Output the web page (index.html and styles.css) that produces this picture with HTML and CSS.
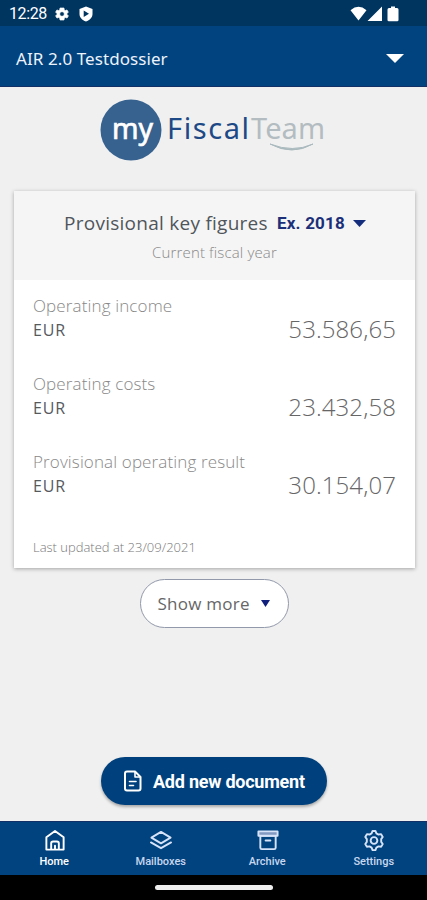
FILE: index.html
```html
<!DOCTYPE html>
<html lang="en">
<head>
<meta charset="utf-8">
<title>My FiscalTeam</title>
<link rel="stylesheet" href="styles.css">
</head>
<body>
<div class="screen">
  <div class="status">
    <span class="time">12:28</span>
    <svg class="gear" width="16" height="16" viewBox="0 0 24 24"><path fill="#fff" stroke="#fff" fill-rule="evenodd" d="M19.400 13a7.500 7.500 0 0 0 0-2l2.100-1.600-2-3.500-2.500 1a7.500 7.500 0 0 0-1.700-1L15 3H9l-.4 2.900a7.500 7.500 0 0 0-1.700 1l-2.500-1-2 3.500L4.600 11a7.500 7.500 0 0 0 0 2l-2.200 1.600 2 3.500 2.500-1a7.500 7.500 0 0 0 1.700 1L9 21h6l.4-2.900a7.500 7.500 0 0 0 1.700-1l2.500 1 2-3.500zM12 8.500a3.500 3.500 0 1 1 0 7 3.500 3.500 0 0 1 0-7z"/></svg>
    <svg class="shield" width="14" height="16" viewBox="0 0 14 16"><path fill="#fff" fill-rule="evenodd" d="M7 .5 13.500 3v5c0 3.500-2.700 6.200-6.500 7.500C3.200 14.200.5 11.500.5 8V3zM4.700 4.500v6.500L10 7.700z"/></svg>
    <svg class="signals" width="50" height="16" viewBox="0 0 50 16" fill="#fff"><path d="M.5 4.200Q8.500-2.500 16.500 4.200L8.500 14.500zM32 .5V15H17.500zM41 .5h4v1.500h2q1.500 0 1.500 1.500V14q0 1.300-1.300 1.300h-8.400Q37.500 15.300 37.500 14V3.500q0-1.500 1.500-1.500h2z"/></svg>
  </div>
  <header class="topbar">
    <span class="dossier">AIR 2.0 Testdossier</span>
    <svg width="18" height="9" viewBox="0 0 18 9"><path fill="#fff" d="M0 0h18L9 9z"/></svg>
  </header>
  <main>
    <svg class="logo" width="228" height="64" viewBox="0 0 228 64">
      <circle cx="31" cy="32" r="30.500" fill="#37628f"/>
      <g class="logo-text">
        <text class="my" x="12" y="41" textLength="41" lengthAdjust="spacingAndGlyphs">my</text>
        <text x="67" y="41" fill="#1d4987" textLength="82" lengthAdjust="spacing">Fiscal</text>
        <text x="151" y="41" fill="#b3bcc1" textLength="74" lengthAdjust="spacing">Team</text>
      </g>
      <path d="M170 46q22 12 43 0q-20 9-43 0z" fill="#a9b9bd" stroke="#a9b9bd"/>
    </svg>
    <section class="card">
      <div class="card-head">
        <div class="title-row"><h1>Provisional key figures</h1><span class="year">Ex. 2018</span>
          <svg width="13" height="7" viewBox="0 0 13 7"><path fill="#152d7d" d="M0 0h13L6.500 7z"/></svg></div>
        <div class="sub">Current fiscal year</div>
      </div>
      <div class="figures">
        <div class="row"><div><div class="label">Operating income</div><div class="cur">EUR</div></div><div class="amount">53.586,65</div></div>
        <div class="row"><div><div class="label">Operating costs</div><div class="cur">EUR</div></div><div class="amount">23.432,58</div></div>
        <div class="row"><div><div class="label">Provisional operating result</div><div class="cur">EUR</div></div><div class="amount">30.154,07</div></div>
        <div class="updated">Last updated at 23/09/2021</div>
      </div>
    </section>
    <button class="more"><span>Show more</span><svg width="9" height="7" viewBox="0 0 9 7"><path fill="#10207c" d="M0 0h9L4.500 7z"/></svg></button>
    <button class="add">
      <svg width="20" height="22" viewBox="0 0 20 22" fill="none" stroke="#fff" stroke-width="2" stroke-linejoin="round" stroke-linecap="round"><path d="M4 1.500h8l5.500 5.500v11.500q0 2-2 2H4q-2 0-2-2v-15q0-2 2-2z"/><path d="M12 2v5h5M6.500 11.500h6.500M6.500 15.500h4" stroke-width="1.600"/></svg>
      <span>Add new document</span>
    </button>
  </main>
  <nav>
    <a class="on"><svg width="24" height="24" viewBox="0 0 24 24"><path d="M3 8.700 12 2l9 6.700V21.500H3zM8 21.500V15q0-2 2-2h4q2 0 2 2v6.500M12 17.500v4"/></svg><span>Home</span></a>
    <a><svg width="24" height="24" viewBox="0 0 24 24"><path d="m12 3 10 6-10 6-10-6zM1.500 14 12 20 22.500 14"/></svg><span>Mailboxes</span></a>
    <a><svg width="24" height="24" viewBox="0 0 24 24"><path d="M4 7h16v12.500q0 1.500-1.500 1.500h-13Q4 21 4 19.500zM9.500 12h5"/><path d="M2 2.500h20V7H2z" fill="#8299c2"/></svg><span>Archive</span></a>
    <a><svg width="24" height="24" viewBox="0 0 24 24"><path d="M9.500 4.500 10.500 2h3l1 2.500 2.200 1.300 2.700-.4 1.700 2.900-1.600 2.200v2.900l1.600 2.200-1.700 2.900-2.700-.4-2.200 1.300-1 2.600h-3l-1-2.600-2.200-1.300-2.700.4-1.700-2.900 1.600-2.200v-2.900L2.900 8.300l1.700-2.900 2.700.4z"/><circle cx="12" cy="12" r="3.500"/></svg><span>Settings</span></a>
  </nav>
  <div class="gesture"><i></i></div>
</div>
</body>
</html>
```
FILE: styles.css
```css
* { box-sizing: border-box; }
body { margin: 0; background: #f0f0f0; font-family: "Open Sans", sans-serif; }
svg { display: block; flex: none; }
.screen { width: 427px; height: 900px; display: flex; flex-direction: column; overflow: hidden; }
.status { height: 26px; background: #00355f; display: flex; align-items: center; padding: 2px 27px 0 9px; color: #fff; }
.time { font: 16px/24px Roboto, sans-serif; width: 38px; white-space: nowrap; letter-spacing: -.4px; }
.gear { margin-left: 7px; }
.shield { margin-left: 9px; }
.signals { margin-left: auto; }
.topbar { height: 61px; background: #00437e; border-bottom: 1px solid #123068; display: flex; align-items: center; justify-content: space-between; padding: 5px 23px 0 16px; color: #eef2fc; }
.dossier { font: 17px/24px "Noto Sans", sans-serif; white-space: nowrap; letter-spacing: .08px; }
main { flex: 1; display: flex; flex-direction: column; align-items: center; padding-top: 11px; }
.logo { margin-left: 1px; }
.logo-text { font: 29px "Noto Sans", sans-serif; }
.my { fill: #fff; stroke: #fff; stroke-width: .7px; }
.card { width: 401px; height: 377px; margin: 29px 0 0 2px; background: #fff; box-shadow: 0 1px 4px rgba(0,0,0,.32); }
.card-head { height: 89px; background: #f5f5f5; padding-top: 18px; text-align: center; }
.title-row { display: flex; align-items: center; height: 28px; padding-left: 50px; }
h1 { margin: 0; width: 212px; text-align: left; font-size: 19px; font-weight: 400; color: #50555b; white-space: nowrap; letter-spacing: .26px; }
.year { font: 700 17px Roboto, sans-serif; color: #1b3079; width: 77px; text-align: left; white-space: nowrap; letter-spacing: .2px; padding-left: 1px; }
.sub { font-size: 15px; line-height: 24px; margin-top: 3px; font-weight: 300; color: #888; letter-spacing: .15px; }
.figures { padding: 14px 19px 0; }
.row { height: 78px; display: flex; justify-content: space-between; white-space: nowrap; }
.label { font-size: 17px; line-height: 24px; font-weight: 300; color: #888; letter-spacing: .13px; }
.cur { font-size: 16px; line-height: 24px; color: #555a60; letter-spacing: .8px; }
.amount { font-size: 24px; line-height: 36px; margin-top: 17px; font-weight: 300; color: #666; letter-spacing: .1px; }
.updated { font-size: 13px; line-height: 20px; margin-top: 9px; font-weight: 300; color: #777; }
button { display: flex; align-items: center; border: 0; padding: 0; }
.more { width: 149px; height: 49px; margin: 11px 0 0 1px; border: 1px solid #9299aa; border-radius: 25px; background: #fff; padding-left: 17px; font: 17px "Open Sans", sans-serif; color: #666; }
.more span { width: 103px; text-align: left; white-space: nowrap; letter-spacing: .25px; }
.add { width: 226px; height: 48px; margin: 129px 0 0 1px; border-radius: 24px; background: #00417d; box-shadow: 0 2px 3px rgba(0,0,0,.3); padding-left: 22px; color: #fff; font: 700 18px Roboto, sans-serif; white-space: nowrap; letter-spacing: -.24px; }
.add span { margin-left: 10px; }
nav { height: 54px; background: #00437e; border-top: 1px solid #123068; display: grid; grid-template-columns: repeat(4, 1fr); padding-left: 1px; }
nav a { display: flex; flex-direction: column; align-items: center; padding-top: 7px; font: 500 11px/15px Roboto, sans-serif; color: #c8d6ee; }
nav span { margin-top: 1px; }
nav svg { width: 25px; height: 24px; padding: 0 0 1px 1px; fill: none; stroke: #d7e3f8; stroke-width: 2; stroke-linejoin: round; stroke-linecap: round; }
nav .on { color: #fff; }
nav .on svg { stroke: #fff; }
.gesture { height: 25px; background: #000; display: flex; justify-content: center; padding-top: 10px; }
.gesture i { width: 118px; height: 5px; border-radius: 3px; background: #eee; }
```
